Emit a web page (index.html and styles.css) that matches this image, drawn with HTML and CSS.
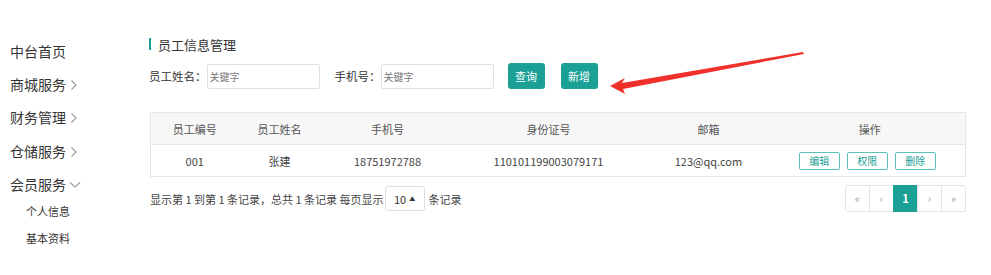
FILE: index.html
```html
<!DOCTYPE html>
<html lang="zh-CN">
<head>
    <meta charset="UTF-8">
    <title>员工信息管理</title>
    <link rel="stylesheet" href="styles.css">
</head>
<body>
<div class="layout">
    <!-- 左侧菜单 -->
    <ul class="side-menu">
        <li class="side-menu__item">中台首页</li>
        <li class="side-menu__item">商城服务
            <svg class="chevron" width="8" height="12" viewBox="0 0 8 12"><path d="M1.5 1.5 L6 6 L1.5 10.5" fill="none" stroke="#a0a0a0" stroke-width="1.2"/></svg>
        </li>
        <li class="side-menu__item">财务管理
            <svg class="chevron" width="8" height="12" viewBox="0 0 8 12"><path d="M1.5 1.5 L6 6 L1.5 10.5" fill="none" stroke="#a0a0a0" stroke-width="1.2"/></svg>
        </li>
        <li class="side-menu__item">仓储服务
            <svg class="chevron" width="8" height="12" viewBox="0 0 8 12"><path d="M1.5 1.5 L6 6 L1.5 10.5" fill="none" stroke="#a0a0a0" stroke-width="1.2"/></svg>
        </li>
        <li class="side-menu__item">会员服务
            <svg class="chevron chevron--down" width="12" height="8" viewBox="0 0 12 8"><path d="M1 1.5 L6 6 L11 1.5" fill="none" stroke="#a0a0a0" stroke-width="1.2"/></svg>
        </li>
        <li>
            <ul class="side-menu__sub">
                <li>个人信息</li>
                <li>基本资料</li>
            </ul>
        </li>
    </ul>

    <!-- 主体 -->
    <div class="main">
        <h2 class="page-title">员工信息管理</h2>

        <div class="search-bar">
            <label class="search-bar__label">员工姓名：</label>
            <input class="search-bar__input" type="text" placeholder="关键字">
            <label class="search-bar__label search-bar__label--gap">手机号：</label>
            <input class="search-bar__input" type="text" placeholder="关键字">
            <button class="btn btn--primary btn--first">查询</button>
            <button class="btn btn--primary">新增</button>
        </div>

        <table class="data-table">
            <thead>
            <tr>
                <th class="col-no">员工编号</th>
                <th class="col-name">员工姓名</th>
                <th class="col-phone">手机号</th>
                <th class="col-id">身份证号</th>
                <th class="col-mail">邮箱</th>
                <th>操作</th>
            </tr>
            </thead>
            <tbody>
            <tr>
                <td>001</td>
                <td>张建</td>
                <td>18751972788</td>
                <td>110101199003079171</td>
                <td>123@qq.com</td>
                <td>
                    <div class="ops">
                        <button class="btn--line">编辑</button>
                        <button class="btn--line">权限</button>
                        <button class="btn--line">删除</button>
                    </div>
                </td>
            </tr>
            </tbody>
        </table>

        <div class="table-footer">
            <div class="page-info">
                显示第 1 到第 1 条记录，总共 1 条记录 每页显示
                <span class="page-size">10 <span class="caret">&#9650;</span></span>
                条记录
            </div>
            <ul class="pager">
                <li>&laquo;</li>
                <li>&lsaquo;</li>
                <li class="pager--active">1</li>
                <li>&rsaquo;</li>
                <li>&raquo;</li>
            </ul>
        </div>
    </div>
</div>

<!-- 标注箭头 -->
<svg class="mark-arrow" width="991" height="275" viewBox="0 0 991 275">
    <polygon points="610,86 625,78 622,83 803,52 804,54 623,89 625,94" fill="#f0302a"/>
</svg>
</body>
</html>
```

FILE: styles.css
```css
* {
    box-sizing: border-box;
}

body {
    margin: 0;
    font-family: "Noto Sans CJK SC", "Noto Sans", sans-serif;
    color: #333;
    background: #fff;
}

ul {
    margin: 0;
    padding: 0;
    list-style: none;
}

.layout {
    display: flex;
}

/* 左侧菜单 */
.side-menu {
    width: 149px;
    flex-shrink: 0;
    padding: 34px 0 0 10px;
}

.side-menu__item {
    display: flex;
    align-items: center;
    height: 33.3px;
    font-size: 14px;
    color: #333;
}

.chevron {
    margin-left: 4px;
    margin-top: 2px;
}

.chevron--down {
    margin-left: 3px;
}

.side-menu__sub {
    margin-top: -2px;
    padding-left: 16px;
}

.side-menu__sub li {
    height: 27px;
    line-height: 27px;
    font-size: 11px;
    color: #333;
}

/* 主体 */
.main {
    width: 817px;
    padding-top: 34px;
}

.page-title {
    display: flex;
    align-items: center;
    margin: 0;
    height: 20px;
    font-size: 13px;
    font-weight: normal;
    color: #333;
}

.page-title:before {
    content: '';
    width: 2px;
    height: 12px;
    margin-right: 7px;
    background-color: #1aa094;
}

.search-bar {
    display: flex;
    align-items: center;
    height: 26px;
    margin-top: 9px;
}

.search-bar__label {
    font-size: 11.5px;
    color: #333;
}

.search-bar__label--gap {
    margin-left: 15px;
}

.search-bar__input {
    width: 113px;
    height: 25px;
    padding: 0 2px;
    border: 1px solid #e0e0e0;
    border-radius: 2px;
    outline: none;
    font-family: inherit;
    font-size: 10px;
    color: #333;
}

.search-bar__input::placeholder {
    color: #777;
}

.btn {
    height: 26px;
    padding: 0 8px;
    border: none;
    border-radius: 3px;
    font-family: inherit;
    font-size: 11px;
    cursor: pointer;
}

.btn--primary {
    width: 37px;
    padding: 0;
    margin-left: 16px;
    color: #fff;
    background-color: #1aa094;
}

.btn--first {
    margin-left: 14px;
}

/* 表格 */
.data-table {
    width: 816px;
    margin-top: 23px;
    margin-left: 1px;
    border-collapse: collapse;
    border: 1px solid #e6e6e6;
    font-size: 11px;
    table-layout: fixed;
}

.data-table th,
.data-table td {
    height: 32px;
    padding: 0;
    text-align: center;
}

.data-table th {
    font-weight: normal;
    color: #555;
    background-color: #f7f7f7;
    border-bottom: 1px solid #e6e6e6;
}

.data-table td {
    color: #444;
}

.col-no { width: 88px; }
.col-name { width: 82px; }
.col-phone { width: 134px; }
.col-id { width: 188px; }
.col-mail { width: 132px; }

.ops {
    display: flex;
    justify-content: center;
    gap: 7px;
    padding-right: 5px;
}

.btn--line {
    width: 41px;
    height: 18px;
    padding: 0;
    border: 1px solid #5cc2b8;
    border-radius: 2px;
    background: #fff;
    color: #1aa094;
    font-family: inherit;
    font-size: 10px;
    cursor: pointer;
}

/* 底部分页 */
.table-footer {
    display: flex;
    justify-content: space-between;
    align-items: center;
    width: 816px;
    margin-top: 8px;
    margin-left: 1px;
}

.page-info {
    display: flex;
    align-items: center;
    font-size: 11px;
    color: #444;
}

.page-size {
    display: inline-flex;
    align-items: center;
    justify-content: center;
    width: 40px;
    height: 25px;
    margin: 0 4px 0 1px;
    border: 1px solid #ddd;
    border-radius: 3px;
    color: #333;
    font-size: 11px;
}

.caret {
    margin-left: 3px;
    font-size: 6px;
}

.pager {
    display: flex;
}

.pager li {
    width: 25px;
    height: 27px;
    line-height: 25px;
    text-align: center;
    font-size: 11px;
    color: #999;
    border: 1px solid #e3e3e3;
    margin-left: -1px;
}

.pager li:first-child {
    border-radius: 3px 0 0 3px;
}

.pager li:last-child {
    border-radius: 0 3px 3px 0;
}

.pager li.pager--active {
    color: #fff;
    font-weight: bold;
    background-color: #1aa094;
    border-color: #1aa094;
}

/* 标注箭头 */
.mark-arrow {
    position: absolute;
    left: 0;
    top: 0;
    pointer-events: none;
}
```
